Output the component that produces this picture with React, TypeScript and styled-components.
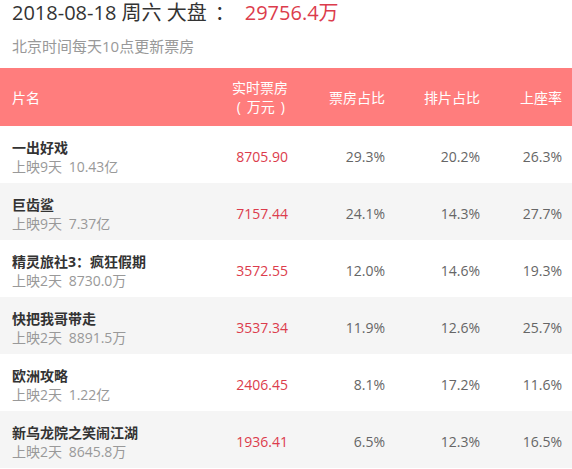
import React from "react";
import styled, { createGlobalStyle } from "styled-components";

const GlobalStyle = createGlobalStyle`
  html, body {
    margin: 0;
    padding: 0;
    background: #fff;
  }
  body {
    font-family: "Open Sans", "Noto Sans CJK SC", sans-serif;
    color: #333;
    text-spacing-trim: space-all;
  }
`;

const Page = styled.div`
  width: 572px;
  height: 469px;
  overflow: hidden;
`;

const Title = styled.div`
  padding: 0 12px;
  font-size: 20px;
  line-height: 26px;
  color: #333;
  white-space: nowrap;
`;

const Colon = styled.span`
  display: inline-block;
  box-sizing: border-box;
  width: 38px;
  padding-left: 8px;
  text-align: left;
`;

const Total = styled.span`
  color: #dc3c4c;
`;

const Subtitle = styled.div`
  margin-top: 10px;
  padding: 0 12px;
  font-size: 15px;
  line-height: 20px;
  color: #999;
`;

const cols = "200px 98px 97px 95px 82px";

const HeadRow = styled.div`
  margin-top: 12px;
  height: 58px;
  display: grid;
  grid-template-columns: ${cols};
  align-items: center;
  background: #ff7d7d;
  color: #fff;
  font-size: 14px;
  line-height: 19px;
`;

const HeadCell = styled.div<{ $left?: boolean }>`
  text-align: ${(p) => (p.$left ? "left" : "right")};
  padding: ${(p) => (p.$left ? "0 0 0 12px" : "0 10px 0 0")};
`;

const Unit = styled.span`
  display: inline-block;
  padding-right: 3px;
`;

const UnitText = styled.span`
  margin: 0 6px;
`;

const Row = styled.div<{ $alt: boolean }>`
  height: 57px;
  box-sizing: border-box;
  padding-top: 4px;
  display: grid;
  grid-template-columns: ${cols};
  align-items: center;
  background: ${(p) => (p.$alt ? "#f5f5f5" : "#fff")};
  font-size: 14px;
  line-height: 19px;
`;

const NameCell = styled.div`
  padding-left: 12px;
  white-space: nowrap;
`;

const FilmName = styled.div`
  font-weight: bold;
  color: #333;
`;

const FilmInfo = styled.div`
  color: #999;
`;

const Gross = styled.span`
  margin-left: 3px;
`;

const NumCell = styled.div<{ $red?: boolean }>`
  text-align: right;
  padding-right: 10px;
  color: ${(p) => (p.$red ? "#dc3c4c" : "#666")};
`;

type Film = {
  name: string;
  days: number;
  sum: string;
  box: string;
  boxRate: string;
  showRate: string;
  seatRate: string;
};

const films: Film[] = [
  { name: "一出好戏", days: 9, sum: "10.43亿", box: "8705.90", boxRate: "29.3%", showRate: "20.2%", seatRate: "26.3%" },
  { name: "巨齿鲨", days: 9, sum: "7.37亿", box: "7157.44", boxRate: "24.1%", showRate: "14.3%", seatRate: "27.7%" },
  { name: "精灵旅社3：疯狂假期", days: 2, sum: "8730.0万", box: "3572.55", boxRate: "12.0%", showRate: "14.6%", seatRate: "19.3%" },
  { name: "快把我哥带走", days: 2, sum: "8891.5万", box: "3537.34", boxRate: "11.9%", showRate: "12.6%", seatRate: "25.7%" },
  { name: "欧洲攻略", days: 2, sum: "1.22亿", box: "2406.45", boxRate: "8.1%", showRate: "17.2%", seatRate: "11.6%" },
  { name: "新乌龙院之笑闹江湖", days: 2, sum: "8645.8万", box: "1936.41", boxRate: "6.5%", showRate: "12.3%", seatRate: "16.5%" },
];

export default function App() {
  return (
    <Page>
      <GlobalStyle />
      <Title>
        2018-08-18 周六 大盘<Colon>：</Colon>
        <Total>29756.4万</Total>
      </Title>
      <Subtitle>北京时间每天10点更新票房</Subtitle>
      <HeadRow>
        <HeadCell $left>片名</HeadCell>
        <HeadCell>
          实时票房
          <br />
          <Unit>
            (<UnitText>万元</UnitText>)
          </Unit>
        </HeadCell>
        <HeadCell>票房占比</HeadCell>
        <HeadCell>排片占比</HeadCell>
        <HeadCell>上座率</HeadCell>
      </HeadRow>
      {films.map((f, i) => (
        <Row key={f.name} $alt={i % 2 === 1}>
          <NameCell>
            <FilmName>{f.name}</FilmName>
            <FilmInfo>
              上映{f.days}天<Gross> {f.sum}</Gross>
            </FilmInfo>
          </NameCell>
          <NumCell $red>{f.box}</NumCell>
          <NumCell>{f.boxRate}</NumCell>
          <NumCell>{f.showRate}</NumCell>
          <NumCell>{f.seatRate}</NumCell>
        </Row>
      ))}
    </Page>
  );
}
